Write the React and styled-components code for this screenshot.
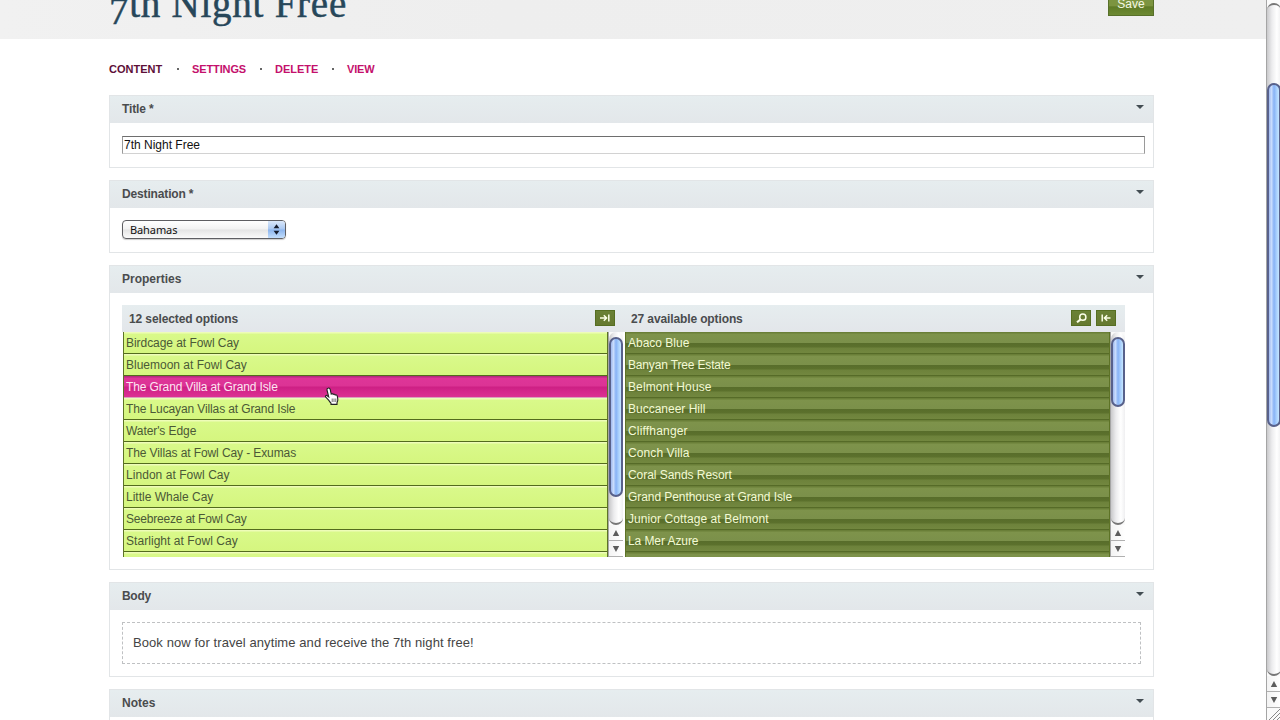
import React from 'react'
import styled, {createGlobalStyle, css} from 'styled-components'

const GlobalStyle = createGlobalStyle`
  * {
    box-sizing: border-box;
  }

  body {
    margin: 0;
    overflow: hidden;
    background: #fff;
    color: #4a4c4e;
    font-family: 'Liberation Sans', Arial, Helvetica, sans-serif;
    font-size: 12px;
  }
`

const Window = styled.div`
  display: flex;
  width: 1280px;
  height: 720px;
  overflow: hidden;
`

const Page = styled.main`
  flex: 1;
  min-width: 0;
  height: 720px;
  overflow: hidden;
`

const Header = styled.header`
  display: flex;
  justify-content: space-between;
  height: 39px;
  padding: 0 112px 0 109px;
  background: linear-gradient(90deg, #f1f1f1, #eee 40%, #efefef);
`

const Heading = styled.h1`
  margin: -18px 0 0;
  color: #27475a;
  font-family: Georgia, 'Liberation Serif', serif;
  font-size: 39px;
  font-weight: 400;
  line-height: 44px;
  letter-spacing: 0.75px;
  white-space: nowrap;
  -webkit-text-stroke: 0.5px #27475a;
`

/* old-style figure, hangs under the baseline */
const Figure = styled.span`
  display: inline-block;
  line-height: 1;
  vertical-align: -7px;
`

const SaveButton = styled.button`
  width: 46px;
  height: 24px;
  margin-top: -8px;
  padding: 0;
  border: 1px solid #58702a;
  background: linear-gradient(#7c9440 60%, #5f7b26 62%, #6c8932);
  color: #f4f8e4;
  font-family: inherit;
  font-size: 12px;
  line-height: 22px;
`

const Nav = styled.nav`
  display: flex;
  height: 56px;
  padding: 22px 0 0 109px;
  font-size: 11px;
  font-weight: 700;
  line-height: 16px;
`

const NavItem = styled.a`
  width: ${({$width}) => $width}px;
  color: ${({$active}) => ($active ? '#5d0f38' : '#c4106c')};
  letter-spacing: ${({$spacing}) => $spacing || 0}px;
  white-space: nowrap;
`

const Dot = styled.span`
  width: 2px;
  height: 2px;
  margin: 7px ${({$after}) => $after}px 0 ${({$before}) => $before}px;
  background: #666;
`

const Sections = styled.div`
  display: flex;
  flex-direction: column;
  gap: 12px;
  width: 1045px;
  margin-left: 109px;
`

const Section = styled.section`
  flex: none;
  height: ${({$height}) => $height}px;
  border: 1px solid #e2e5e7;
  background: #fff;
`

const SectionHeader = styled.h2`
  display: flex;
  justify-content: space-between;
  height: 27px;
  margin: 0;
  padding: 0 9px 0 12px;
  background: linear-gradient(#e6edef, #e3e7ea);
  font-size: 12px;
  font-weight: 700;
  line-height: 26px;
  letter-spacing: ${({$spacing}) => $spacing || 0}px;
`

const Caret = styled.i`
  width: 0;
  height: 0;
  margin-top: 9px;
  border: 4px solid transparent;
  border-top-color: #434d53;
  border-bottom: 0;
`

const SectionBody = styled.div`
  padding: ${({$top}) => $top || 12}px 0 0 12px;
`

const TextInput = styled.input`
  display: block;
  width: 1023px;
  height: 18px;
  padding: 0 1px;
  border: 1px solid #9a9a9a;
  border-top-color: #6e6e6e;
  border-bottom-color: #d2d2d2;
  border-radius: 0;
  outline: 0;
  background: #fff;
  color: #111;
  font: 12px 'Liberation Sans', Arial, sans-serif;
`

const Select = styled.div`
  display: flex;
  justify-content: space-between;
  width: 164px;
  height: 19px;
  padding-left: 7px;
  border: 1px solid #5e5e62;
  border-radius: 4px;
  overflow: hidden;
  background: linear-gradient(#fff, #f2f2f2 48%, #e4e4e4 52%, #fafafa);
  box-shadow: 0 1px 1px #ccc;
  color: #111;
  font-family: 'Noto Sans', sans-serif;
  font-size: 11px;
  line-height: 18px;
  letter-spacing: -0.1px;
`

const SelectArrows = styled.span`
  display: flex;
  width: 17px;
  align-items: center;
  justify-content: center;
  background: linear-gradient(#dbe8fa, #a9c8f2 48%, #8cb5ee 52%, #c3defc);
`

const Picker = styled.div`
  display: grid;
  grid-template-columns: 503px 500px;
  grid-template-rows: 27px 225px;
  width: 1003px;
`

const PickerHeader = styled.div`
  display: flex;
  align-items: center;
  gap: 5px;
  padding: 0 ${({$right}) => $right}px 0 ${({$left}) => $left}px;
  background: linear-gradient(#e6edef, #e3e6ea);
`

const PickerTitle = styled.strong`
  flex: 1;
  padding-top: 1px;
  font-size: 12px;
  line-height: 26px;
  letter-spacing: -0.12px;
`

const IconButton = styled.button`
  display: flex;
  align-items: center;
  justify-content: center;
  width: 20px;
  height: 16px;
  margin-bottom: 1px;
  padding: 0;
  border: 1px solid #566e22;
  background: linear-gradient(#6a8136, #66792f);
  color: #fbffe8;
`

const ListFrame = styled.div`
  display: flex;
  padding-left: ${({$left}) => $left || 0}px;
`

const List = styled.ul`
  width: ${({$width}) => $width}px;
  height: 225px;
  margin: 0;
  padding: 0;
  overflow: hidden;
  list-style: none;
  border-left: 1px solid #5d7326;
  border-right: 1px solid #5d7326;
`

const selectedRow = css`
  border-bottom: 1px solid #536b1d;
  background: linear-gradient(#eefcb8 1px, #d9f98a 2px, #d5f67f);
  color: #4b5936;
`

const activeRow = css`
  border-bottom: 1px solid #d9a3bb;
  background: linear-gradient(#b52a7e 1px, #de3598 2px, #dc3395 10px, #cd1f84 11px, #d4268b 15px, #dc3193);
  color: #fde6f2;
`

const availableRow = css`
  border-bottom: 1px solid #566b28;
  background: linear-gradient(#6a7f38 1px, #7e934b 2px, #7b904a 11px, #586d2b 11px, #5c712d 15px, #6d823b 16px, #72873f);
  color: #f3fad4;
`

const Row = styled.li`
  height: 22px;
  padding: 1px 0 0 2px;
  line-height: 20px;
  white-space: nowrap;
  letter-spacing: ${({$spacing}) => $spacing || 0}px;
  ${({$kind}) =>
    ({selected: selectedRow, active: activeRow, available: availableRow}[$kind])};
`

const Bar = styled.div`
  display: flex;
  flex: none;
  flex-direction: column;
  width: ${({$width}) => $width}px;
  height: ${({$height}) => $height}px;
  padding-top: ${({$top}) => $top}px;
  border-left: 1px solid #a5a5a5;
  overflow: hidden;
  background: #fafafa;
`

const Track = styled.div`
  flex: 1;
  width: 14px;
  padding-top: ${({$offset}) => $offset}px;
  border: solid #777;
  border-width: ${({$cap}) => ($cap ? 2 : 0)}px 0 2px;
  border-radius: 7px;
  background: linear-gradient(90deg, #c9c9cb, #ececee 35%, #fff 70%, #efeff1);
`

const Thumb = styled.div`
  width: 14px;
  height: ${({$size}) => $size}px;
  border: 2px solid #58618b;
  border-radius: 7px;
  background: linear-gradient(90deg, #a0b8ee, #c8dcfc 25%, #87b2f5 50%, #a8cffc 75%, #c5e6ff);
`

const ArrowCell = styled.div`
  display: flex;
  flex: none;
  align-items: center;
  justify-content: center;
  width: 14px;
  height: 16px;
  border-bottom: 1px solid #b0b0b0;
  background: linear-gradient(90deg, #f3f3f3, #fff);
`

const Grip = styled.svg`
  flex: none;
  display: block;
`

const RichText = styled.div`
  width: 1019px;
  height: 42px;
  padding-left: 10px;
  border: 1px dashed #bfc1c3;
  color: #444;
  font-size: 13px;
  line-height: 40px;
  letter-spacing: 0.08px;
`

const Pointer = styled.svg`
  position: absolute;
  left: 322px;
  top: 386px;
`

const SELECTED = [
  {name: 'Birdcage at Fowl Cay', spacing: -0.05},
  {name: 'Bluemoon at Fowl Cay'},
  {name: 'The Grand Villa at Grand Isle', spacing: -0.12},
  {name: 'The Lucayan Villas at Grand Isle', spacing: -0.12},
  {name: "Water's Edge", spacing: -0.08},
  {name: 'The Villas at Fowl Cay - Exumas', spacing: -0.1},
  {name: 'Lindon at Fowl Cay', spacing: 0.05},
  {name: 'Little Whale Cay'},
  {name: 'Seebreeze at Fowl Cay', spacing: -0.2},
  {name: 'Starlight at Fowl Cay', spacing: 0.05},
  {name: ''}
]

const AVAILABLE = [
  {name: 'Abaco Blue'},
  {name: 'Banyan Tree Estate', spacing: -0.16},
  {name: 'Belmont House', spacing: 0.12},
  {name: 'Buccaneer Hill'},
  {name: 'Cliffhanger', spacing: 0.18},
  {name: 'Conch Villa', spacing: 0.1},
  {name: 'Coral Sands Resort', spacing: -0.05},
  {name: 'Grand Penthouse at Grand Isle', spacing: -0.07},
  {name: 'Junior Cottage at Belmont', spacing: 0.08},
  {name: 'La Mer Azure', spacing: -0.08},
  {name: ''}
]

const Arrow = ({down}) => (
  <svg width="8" height="8" viewBox="0 0 8 8">
    <path d={down ? 'M.8 1h6.400L4 7z' : 'M.8 7h6.400L4 1z'} fill="#5c5c5c" />
  </svg>
)

const ScrollBar = ({width, height, top = 0, cap, offset, size, grip}) => (
  <Bar $width={width} $height={height} $top={top}>
    <Track $cap={cap} $offset={offset}>
      <Thumb $size={size} />
    </Track>
    <ArrowCell>
      <Arrow />
    </ArrowCell>
    <ArrowCell>
      <Arrow down />
    </ArrowCell>
    {grip && (
      <Grip width="14" height="12" viewBox="0 0 14 12">
        <path d="M2 12L14 0M6 12L14 4M10 12L14 8" stroke="#888" fill="none" />
      </Grip>
    )}
  </Bar>
)

const Panel = ({title, height, top, spacing, children}) => (
  <Section $height={height}>
    <SectionHeader $spacing={spacing}>
      {title}
      <Caret />
    </SectionHeader>
    <SectionBody $top={top}>{children}</SectionBody>
  </Section>
)

const App = () => (
  <>
    <GlobalStyle />
    <Window>
      <Page>
        <Header>
          <Heading>
            <Figure>7</Figure>th Night Free
          </Heading>
          <SaveButton>Save</SaveButton>
        </Header>
        <Nav>
          <NavItem $active $width={54}>CONTENT</NavItem>
          <Dot $before={14} $after={13} />
          <NavItem $width={54} $spacing={-0.12}>SETTINGS</NavItem>
          <Dot $before={14} $after={13} />
          <NavItem $width={43}>DELETE</NavItem>
          <Dot $before={14} $after={13} />
          <NavItem $width={28} $spacing={-0.2}>VIEW</NavItem>
        </Nav>
        <Sections>
          <Panel title="Title *" height={73} top={13} spacing={-0.15}>
            <TextInput defaultValue="7th Night Free" />
          </Panel>
          <Panel title="Destination *" height={73} spacing={-0.15}>
            <Select>
              Bahamas
              <SelectArrows>
                <svg width="7" height="11" viewBox="0 0 7 11">
                  <path d="M.6 4.200h5.800L3.500 0.300zM.6 6.800h5.800L3.500 10.700z" fill="#151b2b" />
                </svg>
              </SelectArrows>
            </Select>
          </Panel>
          <Panel title="Properties" height={305}>
            <Picker>
              <PickerHeader $left={7} $right={10}>
                <PickerTitle>12 selected options</PickerTitle>
                <IconButton>
                  <svg width="10" height="8" viewBox="0 0 10 8" fill="none" stroke="currentColor" strokeWidth="1.5">
                    <path d="M0 4h6M3.800 1.200L6.600 4 3.800 6.800M8.800 0.500v7" />
                  </svg>
                </IconButton>
              </PickerHeader>
              <PickerHeader $left={6} $right={9}>
                <PickerTitle>27 available options</PickerTitle>
                <IconButton>
                  <svg width="11" height="10" viewBox="0 0 11 10" fill="none" stroke="currentColor">
                    <circle cx="6.8" cy="4.2" r="3.1" strokeWidth="1.5" />
                    <path d="M4.600 6.400L1 9.300" strokeWidth="2" />
                  </svg>
                </IconButton>
                <IconButton>
                  <svg width="10" height="8" viewBox="0 0 10 8" fill="none" stroke="currentColor" strokeWidth="1.5">
                    <path d="M9.500 4H3.500M6.200 1.200L3.400 4l2.800 2.800M1.200 0.500v7" />
                  </svg>
                </IconButton>
              </PickerHeader>
              <ListFrame $left={1}>
                <List $width={485}>
                  {SELECTED.map(({name, spacing}, i) => (
                    <Row key={i} $kind={i === 2 ? 'active' : 'selected'} $spacing={spacing}>
                      {name}
                    </Row>
                  ))}
                </List>
                <ScrollBar width={15} height={225} offset={5} size={160} />
              </ListFrame>
              <ListFrame>
                <List $width={485}>
                  {AVAILABLE.map(({name, spacing}, i) => (
                    <Row key={i} $kind="available" $spacing={spacing}>
                      {name}
                    </Row>
                  ))}
                </List>
                <ScrollBar width={15} height={225} offset={5} size={70} />
              </ListFrame>
            </Picker>
          </Panel>
          <Panel title="Body" height={95} spacing={-0.3}>
            <RichText>Book now for travel anytime and receive the 7th night free!</RichText>
          </Panel>
          <Panel title="Notes" height={95} />
        </Sections>
      </Page>
      <ScrollBar width={14} height={720} top={3} cap offset={78} size={344} grip />
    </Window>
    <Pointer width="18" height="20" viewBox="0 0 18 20">
      <path
        d="M6 2.200c1-.4 1.900.1 2.200 1.300L9.200 8c.7-.6 1.700-.4 2 .4.700-.5 1.800-.3 2 .6.900-.4 1.900.1 2.100 1.200l.5 3c.2 1.500-.3 2.300-.8 3.400v1.800H9v-1.300c-1-.8-1.600-1.900-2.400-3L3.600 11c-.7-1.100.6-2.100 1.600-1.300l1.500 1.100L5 4c-.2-.9.200-1.600 1-1.800z"
        fill="#fff"
        stroke="#222"
        strokeWidth="1.1"
      />
      <path d="M10.200 12.500v3.500M12 12.500v3.500M13.800 12.500v3.500" stroke="#333" strokeWidth=".7" />
    </Pointer>
  </>
)

export default App
